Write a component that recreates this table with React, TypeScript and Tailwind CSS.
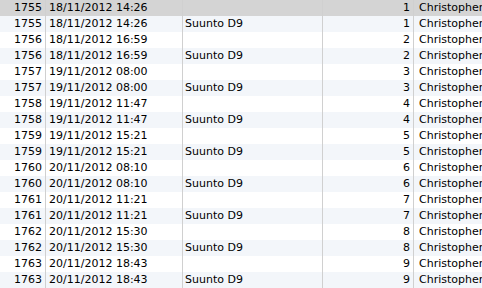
import React from "react";

type Row = { id: string; date: string; device: string; num: string };

const base: [string, string, string][] = [
  ["1755", "18/11/2012 14:26", "1"],
  ["1756", "18/11/2012 16:59", "2"],
  ["1757", "19/11/2012 08:00", "3"],
  ["1758", "19/11/2012 11:47", "4"],
  ["1759", "19/11/2012 15:21", "5"],
  ["1760", "20/11/2012 08:10", "6"],
  ["1761", "20/11/2012 11:21", "7"],
  ["1762", "20/11/2012 15:30", "8"],
  ["1763", "20/11/2012 18:43", "9"],
];

const rows: Row[] = base.flatMap(([id, date, num]) => [
  { id, date, device: "", num },
  { id, date, device: "Suunto D9", num },
]);

const App: React.FC = () => {
  return (
    <div
      className="w-[482px] h-[288px] overflow-hidden bg-white text-black text-[11px] leading-[16px]"
      style={{ fontFamily: '"DejaVu Sans", "Liberation Sans", sans-serif' }}
    >
      {rows.map((row, i) => (
        <div
          key={i}
          className={`flex h-[16px] whitespace-nowrap ${
            i === 0 ? "bg-[#d4d4d4]" : i % 2 === 1 ? "bg-[#f3f6fa]" : "bg-white"
          }`}
        >
          <div className="w-[46px] shrink-0 border-r border-[#d0d0d0] text-right pr-[3px]">
            {row.id}
          </div>
          <div className="w-[137px] shrink-0 border-r border-[#d0d0d0] pl-[3px]">
            {row.date}
          </div>
          <div className="w-[140px] shrink-0 border-r border-[#d0d0d0] pl-[2px]">
            {row.device}
          </div>
          <div className="w-[91px] shrink-0 border-r border-[#d0d0d0] text-right pr-[3px]">
            {row.num}
          </div>
          <div className="flex-1 pl-[5px] overflow-hidden">Christopher</div>
        </div>
      ))}
    </div>
  );
};

export default App;
